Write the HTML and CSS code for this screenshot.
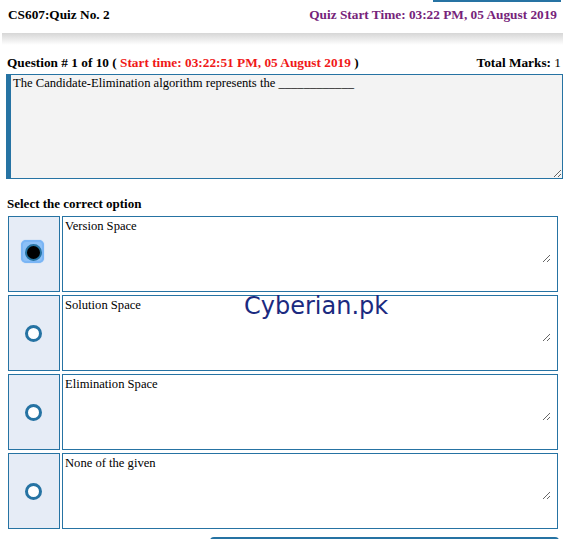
FILE: index.html
```html
<!DOCTYPE html>
<html lang="en">
<head>
    <meta charset="UTF-8">
    <title>CS607 Quiz No. 2</title>
    <link rel="stylesheet" href="styles.css">
</head>
<body>
<div class="top-strip"><span class="top-btn"></span></div>
<div class="quiz-header">
    <strong>CS607:Quiz No. 2</strong>
    <strong class="start-time">Quiz Start Time: 03:22 PM, 05 August 2019</strong>
</div>
<div class="shade"></div>

<div class="question">
    <div class="question-title">
        <strong>Question # 1 of 10 ( <span class="red">Start time: 03:22:51 PM, 05 August 2019</span> )</strong>
        <span><strong>Total Marks:</strong> 1</span>
    </div>
    <textarea class="question-text" readonly>The Candidate-Elimination algorithm represents the ____________</textarea>
</div>

<h4 class="select-title">Select the correct option</h4>
<div class="options" id="options">
    <span class="watermark">Cyberian.pk</span>
</div>
<div class="bottom-bar"><span class="next-btn"></span></div>

<script>
    const answers = [
        'Version Space',
        'Solution Space',
        'Elimination Space',
        'None of the given',
    ];
    let selected = 0;
    const box = document.getElementById('options');

    function showOptions() {
        let rows = '';
        for (let i = 0; i < answers.length; i++) {
            rows += '<div class="radio-cell"><span class="radio' + (i === selected ? ' checked' : '') + '"></span></div>';
            rows += '<div class="answer-cell"><textarea readonly>' + answers[i] + '</textarea></div>';
        }
        box.insertAdjacentHTML('beforeend', rows);
    }
    showOptions();
</script>
</body>
</html>
```

FILE: styles.css
```css
html {
    overflow: hidden;
}
body {
    margin: 0;
    font-family: "Liberation Serif", "Times New Roman", serif;
    font-size: 13px;
    color: #000;
}
.top-strip {
    display: flex;
    height: 2px;
}
.top-btn {
    margin-left: auto;
    margin-right: 5px;
    width: 128px;
    background-color: #2673a3;
}
.quiz-header {
    display: flex;
    justify-content: space-between;
    padding: 5px 9px 0 8px;
    height: 26px;
    font-size: 13.3px;
}
.start-time {
    color: #76237a;
}
.shade {
    height: 12px;
    margin: 0 3px 0 2px;
    background: linear-gradient(#d6d6d6, #ffffff);
}
.question {
    padding: 10px 3px 0 6px;
}
.question-title {
    display: flex;
    justify-content: space-between;
    padding: 0 2px 0 1px;
    font-size: 13.3px;
    height: 19px;
}
.red {
    color: #f01818;
}
.question-text {
    display: block;
    box-sizing: border-box;
    width: 100%;
    height: 105px;
    margin: 0;
    padding: 1px 2px;
    border: 1px solid #2673a3;
    border-left: 5px solid #2673a3;
    background-color: #f3f3f3;
    font-family: inherit;
    font-size: 12.6px;
    outline: none;
}
.select-title {
    margin: 17px 0 0 7px;
    font-size: 13px;
    height: 20px;
}
.options {
    position: relative;
    display: grid;
    grid-template-columns: 52px 496px;
    column-gap: 2px;
    row-gap: 3px;
    padding-left: 8px;
}
.radio-cell, .answer-cell {
    box-sizing: border-box;
    height: 76px;
    border: 1px solid #2673a3;
}
.radio-cell {
    position: relative;
    z-index: 0;
    display: flex;
    align-items: center;
    justify-content: center;
    padding-right: 1px;
    background-color: #e6ecf6;
}
.answer-cell {
    background-color: #fff;
}
.answer-cell textarea {
    display: block;
    box-sizing: border-box;
    width: 488px;
    height: 46px;
    margin: 0;
    padding: 2px 2px;
    border: none;
    font-family: inherit;
    font-size: 12.6px;
    outline: none;
}
.radio {
    position: relative;
    box-sizing: border-box;
    width: 17px;
    height: 17px;
    border: 3.5px solid #2673a3;
    border-radius: 50%;
    background-color: #fff;
}
/* focus glow around the chosen answer */
.radio.checked {
    border-width: 2.5px;
    background-color: #000;
    margin-top: -3px;
}
.radio.checked::before {
    content: '';
    position: absolute;
    left: -6px;
    top: -6px;
    width: 19px;
    height: 19px;
    border: 2px solid #7ab5f5;
    border-radius: 5px;
    background-color: #8cc0f7;
    box-shadow: 0 0 1px #7ab5f5;
    z-index: -1;
}
.watermark {
    position: absolute;
    left: 244px;
    top: 76px;
    font-family: "DejaVu Sans", Verdana, sans-serif;
    font-size: 24px;
    color: #1b2a80;
    pointer-events: none;
}
.bottom-bar {
    display: flex;
    margin-top: 8px;
}
.next-btn {
    margin-left: 210px;
    width: 349px;
    height: 20px;
    border-top: 3px solid #2673a3;
    border-radius: 4px 4px 0 0;
}
```
